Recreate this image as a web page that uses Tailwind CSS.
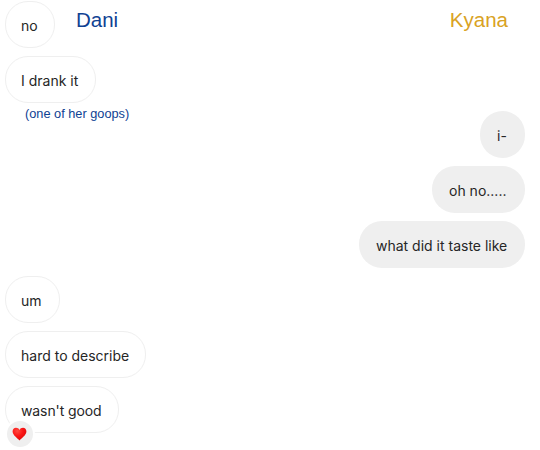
<!DOCTYPE html>
<html lang="en">
<head>
    <meta charset="UTF-8">
    <meta name="viewport" content="width=device-width, initial-scale=1.0">
    <title>Chat - Dani and Kyana</title>
    <script src="https://cdn.jsdelivr.net/npm/@tailwindcss/browser@4"></script>
</head>
<body class="bg-white overflow-hidden">
    <!-- Conversation -->
    <div class="w-[540px] h-[450px] overflow-hidden pt-px pl-[5px] pr-[15px] flex flex-col gap-2 font-['Inter',sans-serif] text-[14px] leading-5 text-[#262626]">
        <div class="flex items-start">
            <div class="w-[50px] h-[47px] shrink-0 flex items-center pl-[15px] pt-[2px] border border-[#efefef] rounded-[23px] whitespace-nowrap">no</div>
            <span class="ml-[21px] mt-[7px] font-['Liberation_Sans',sans-serif] text-[20.5px] leading-6 text-[#0f4293]">Dani</span>
            <span class="ml-auto mr-[17px] mt-[7px] font-['Liberation_Sans',sans-serif] text-[20.5px] leading-6 text-[#d9a223]">Kyana</span>
        </div>
        <div class="w-[91px] h-[47px] shrink-0 flex items-center pl-[15px] pt-[2px] border border-[#efefef] rounded-[23px] whitespace-nowrap">I drank it</div>

        <div class="flex items-start justify-between">
            <span class="ml-5 -mt-[5px] font-['Liberation_Sans',sans-serif] text-[12.75px] leading-4 text-[#0f4293]">(one of her goops)</span>
            <div class="w-[45px] h-[47px] flex items-center pl-[17px] pt-[2px] bg-[#efefef] rounded-[23px] whitespace-nowrap">i-</div>
        </div>
        <div class="self-end w-[93px] h-[47px] shrink-0 flex items-center pl-[17px] pt-[2px] bg-[#efefef] rounded-[23px] whitespace-nowrap">oh no.....</div>
        <div class="self-end w-[166px] h-[47px] shrink-0 flex items-center pl-[17px] pt-[2px] bg-[#efefef] rounded-[23px] whitespace-nowrap">what did it taste like</div>

        <div class="w-[55px] h-[47px] shrink-0 flex items-center pl-[15px] pt-[2px] border border-[#efefef] rounded-[23px] whitespace-nowrap">um</div>
        <div class="w-[141px] h-[47px] shrink-0 flex items-center pl-[15px] pt-[2px] border border-[#efefef] rounded-[23px] whitespace-nowrap">hard to describe</div>
        <div class="relative w-[114px] h-[47px] shrink-0 flex items-center pl-[15px] pt-[2px] border border-[#efefef] rounded-[23px] whitespace-nowrap tracking-[-0.1px]">
            wasn't good
            <!-- Reaction -->
            <div class="absolute -left-px top-[32px] w-[30px] h-[30px] flex items-center justify-center bg-[#efefef] border-2 border-white rounded-full">
                <svg class="w-[15px] h-[14px] mb-px mr-px" viewBox="0 0 15 14">
                    <defs>
                        <radialGradient id="heart" cx="0.35" cy="0.25" r="0.8">
                            <stop offset="0" stop-color="#ff4a40"/>
                            <stop offset="0.5" stop-color="#fa1414"/>
                            <stop offset="1" stop-color="#d90a0a"/>
                        </radialGradient>
                    </defs>
                    <path fill="url(#heart)" d="M7.5 13.6C6.5 11.6 .6 8.600 .6 4.500C.6 2.200 2.100 .8 4 .8C5.600 .8 6.900 1.700 7.500 3C8.100 1.700 9.400 .8 11 .8C12.900 .8 14.400 2.200 14.400 4.500C14.400 8.600 8.500 11.600 7.500 13.600Z"/>
                </svg>
            </div>
        </div>
    </div>
</body>
</html>
